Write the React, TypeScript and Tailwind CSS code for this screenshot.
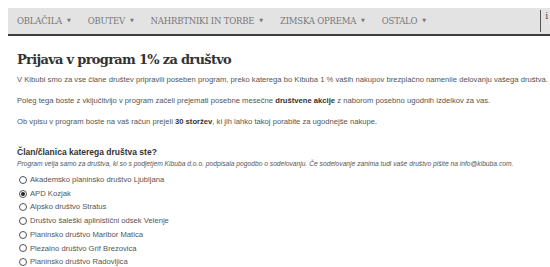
const navItems = ["OBLAČILA", "OBUTEV", "NAHRBTNIKI IN TORBE", "ZIMSKA OPREMA", "OSTALO"];

const clubs = [
  "Akademsko planinsko društvo Ljubljana",
  "APD Kozjak",
  "Alpsko društvo Stratus",
  "Društvo šaleški aplinistični odsek Velenje",
  "Planinsko društvo Maribor Matica",
  "Plezalno društvo Grif Brezovica",
  "Planinsko društvo Radovljica",
];

function Radio({ checked }: { checked?: boolean }) {
  return (
    <span className="w-[8px] h-[8px] rounded-full border border-[#555] bg-white flex items-center justify-center shrink-0">
      {checked && <span className="w-[4px] h-[4px] rounded-full bg-[#222]" />}
    </span>
  );
}

export default function App() {
  return (
    <div className="w-[550px] h-[267px] overflow-hidden bg-white pt-2 pl-2 relative">
      <nav className="h-[28px] bg-[#e3e3e3] border-b-2 border-[#3d3d3d] flex items-center pl-[9px] font-['DejaVu_Serif',serif] text-[#777] text-[8.5px] tracking-[-0.2px]">
        {navItems.map((item) => (
          <span key={item} className="flex items-center mr-[17px] whitespace-nowrap">
            {item}
            <span className="ml-[5px] text-[5px]">▼</span>
          </span>
        ))}
        <span className="ml-auto mr-[2px] h-[22px] border-l border-[#555] pl-[4px] text-[9px] text-[#444]">i</span>
      </nav>

      <main className="pl-[9px] font-['Liberation_Sans',Arial,sans-serif] text-[#555] text-[7.65px]">
        <h1 className="mt-[15px] font-['DejaVu_Serif',serif] font-bold text-[#333] text-[13px] leading-[18px] tracking-[-0.7px]">
          Prijava v program 1% za društvo
        </h1>
        <p className="mt-[6px] leading-[10px] whitespace-nowrap">
          V Kibubi smo za vse člane društev pripravili poseben program, preko katerega bo Kibuba 1 % vaših nakupov
          brezplačno namenile delovanju vašega društva.
        </p>
        <p className="mt-[11px] leading-[10px] whitespace-nowrap">
          Poleg tega boste z vključitvijo v program začeli prejemati posebne mesečne{" "}
          <b className="text-[#333]">društvene akcije</b> z naborom posebno ugodnih izdelkov za vas.
        </p>
        <p className="mt-[11px] leading-[10px] whitespace-nowrap">
          Ob vpisu v program boste na vaš račun prejeli <b className="text-[#333]">30 storžev</b>, ki jih lahko takoj
          porabite za ugodnejše nakupe.
        </p>

        <h2 className="mt-[20px] font-bold text-[#333] text-[8.5px] leading-[10px]">Član/članica katerega društva ste?</h2>
        <p className="mt-[2px] italic text-[6.7px] leading-[10px] whitespace-nowrap">
          Program velja samo za društva, ki so s podjetjem Kibuba d.o.o. podpisala pogodbo o sodelovanju. Če sodelovanje
          zanima tudi vaše društvo pišite na info@kibuba.com.
        </p>

        <ul className="mt-[4px] flex flex-col">
          {clubs.map((club, i) => (
            <li key={club} className="h-[13.7px] flex items-center gap-[3px] pl-[2px] whitespace-nowrap">
              <Radio checked={i === 1} />
              {club}
            </li>
          ))}
        </ul>
      </main>
    </div>
  );
}
